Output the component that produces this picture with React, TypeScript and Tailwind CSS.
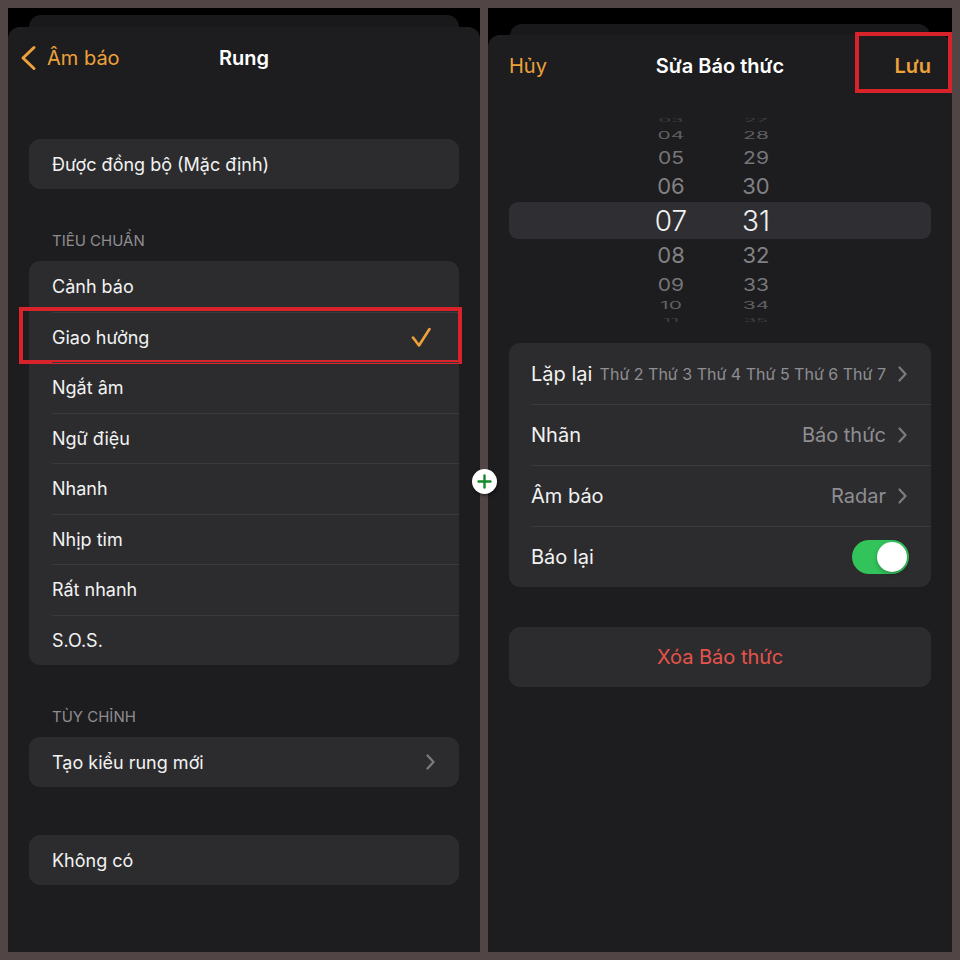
import React from "react";

const FONT = { fontFamily: "Inter, 'Noto Sans', 'Liberation Sans', sans-serif" };

function ChevronRight({ className = "" }: { className?: string }) {
  return (
    <svg width="9" height="16" viewBox="0 0 9 16" className={className} fill="none">
      <polyline points="1.5,1.5 7.5,8 1.5,14.5" stroke="currentColor" strokeWidth="2.2" strokeLinecap="round" strokeLinejoin="round" />
    </svg>
  );
}

function Check() {
  return (
    <svg width="20" height="21" viewBox="0 0 20 21" fill="none">
      <polyline points="2,10.5 8,18.5 18.5,2" stroke="#eda13a" strokeWidth="2.6" strokeLinecap="round" strokeLinejoin="round" />
    </svg>
  );
}

const standard = ["Cảnh báo", "Giao hưởng", "Ngắt âm", "Ngữ điệu", "Nhanh", "Nhịp tim", "Rất nhanh", "S.O.S."];

function LeftSheet() {
  return (
    <div className="flex w-[472px] flex-col bg-black">
      <div className="mx-[21px] mt-[7px] h-[24px] shrink-0 rounded-t-[12px] bg-[#19191b]" />
      <div className="relative -mt-[12px] flex flex-1 flex-col rounded-t-[12px] bg-[#1d1d1f]">
        {/* navigation bar */}
        <div className="relative flex h-[62px] shrink-0 items-center justify-center">
          <div className="absolute left-[12px] top-0 flex h-full items-center gap-[10px] text-[#eda13a]">
            <svg width="17" height="26" viewBox="0 0 17 26" fill="none">
              <polyline points="14,2.5 3,13 14,23.5" stroke="currentColor" strokeWidth="3" strokeLinecap="round" strokeLinejoin="round" />
            </svg>
            <span className="text-[20px] leading-none">Âm báo</span>
          </div>
          <span className="text-[20px] font-semibold leading-none text-white">Rung</span>
        </div>

        <div className="mx-[21px] mt-[50px] flex h-[50px] items-center rounded-[11px] bg-[#2c2c2e] pl-[23px] text-[18px] text-[#f2f2f2]">
          Được đồng bộ (Mặc định)
        </div>

        <div className="mx-[21px] pb-[10px] pl-[23px] pt-[42px] text-[15px] leading-[20px] text-[#8d8d92]">TIÊU CHUẨN</div>
        <div className="mx-[21px] flex flex-col rounded-[11px] bg-[#2c2c2e]">
          {standard.map((name, i) => (
            <div key={name} className="relative h-[50.5px] pl-[23px]">
              <div className={`flex h-full items-center justify-between pr-[28px] text-[18px] text-[#f2f2f2] ${i > 0 ? "border-t border-[#3a3a3c]" : ""}`}>
                <span>{name}</span>
                {i === 1 && <Check />}
              </div>
              {i === 1 && (
                <div className="pointer-events-none absolute -left-[10px] -right-[3px] -top-[4.5px] -bottom-[2px] border-[4px] border-[#d8232a]" />
              )}
            </div>
          ))}
        </div>

        <div className="mx-[21px] pb-[10px] pl-[23px] pt-[42px] text-[15px] leading-[20px] text-[#8d8d92]">TÙY CHỈNH</div>
        <div className="mx-[21px] flex h-[50px] items-center justify-between rounded-[11px] bg-[#2c2c2e] pl-[23px] pr-[24px] text-[18px] text-[#f2f2f2]">
          <span>Tạo kiểu rung mới</span>
          <ChevronRight className="text-[#7c7c80]" />
        </div>

        <div className="mx-[21px] mt-[48px] flex h-[50px] items-center rounded-[11px] bg-[#2c2c2e] pl-[23px] text-[18px] text-[#f2f2f2]">
          Không có
        </div>
      </div>
    </div>
  );
}

type WheelRow = { h: string; hour: string; minute: string; cls: string; selected?: boolean };

const wheel: WheelRow[] = [
  { h: "h-[12px]", hour: "03", minute: "27", cls: "text-[20px] scale-y-[0.22] text-[#8c8c90] opacity-30" },
  { h: "h-[18px]", hour: "04", minute: "28", cls: "text-[21px] scale-y-[0.5] text-[#8c8c90] opacity-60" },
  { h: "h-[26px]", hour: "05", minute: "29", cls: "text-[21px] scale-y-[0.82] text-[#8c8c90] opacity-80" },
  { h: "h-[32px]", hour: "06", minute: "30", cls: "text-[22px] text-[#8c8c90] opacity-90" },
  { h: "h-[37px]", hour: "07", minute: "31", cls: "text-[28px] font-light text-[#f2f2f2]", selected: true },
  { h: "h-[32px]", hour: "08", minute: "32", cls: "text-[22px] text-[#8c8c90] opacity-90" },
  { h: "h-[26px]", hour: "09", minute: "33", cls: "text-[21px] scale-y-[0.82] text-[#8c8c90] opacity-80" },
  { h: "h-[17px]", hour: "10", minute: "34", cls: "text-[21px] scale-y-[0.5] text-[#8c8c90] opacity-60" },
  { h: "h-[12px]", hour: "11", minute: "35", cls: "text-[20px] scale-y-[0.22] text-[#8c8c90] opacity-30" },
];

function SettingRow({ label, children, first }: { label: string; children: React.ReactNode; first?: boolean }) {
  return (
    <div className="h-[61px] pl-[22px]">
      <div className={`flex h-full items-center justify-between pr-[24px] ${first ? "" : "border-t border-[#3a3a3c]"}`}>
        <span className="text-[20px] text-[#f2f2f2]">{label}</span>
        {children}
      </div>
    </div>
  );
}

function RightSheet() {
  return (
    <div className="flex flex-1 flex-col bg-black">
      <div className="mx-[22px] mt-[16px] h-[23px] shrink-0 rounded-t-[12px] bg-[#19191b]" />
      <div className="relative -mt-[12px] flex flex-1 flex-col rounded-t-[12px] bg-[#1d1d1f]">
        {/* navigation bar */}
        <div className="relative flex h-[62px] shrink-0 items-center justify-between px-[21px]">
          <span className="text-[20px] leading-none text-[#eda13a]">Hủy</span>
          <span className="absolute left-0 right-0 text-center text-[20px] font-semibold leading-none text-white">Sửa Báo thức</span>
          <span className="text-[20px] font-semibold leading-none text-[#eda13a]">Lưu</span>
          <div className="pointer-events-none absolute -top-[3px] right-0 h-[61px] w-[97px] border-[4px] border-[#d8232a]" />
        </div>

        {/* time wheel */}
        <div className="mt-[17px] flex flex-col">
          {wheel.map((r) => (
            <div
              key={r.hour}
              className={`mx-[21px] flex ${r.h} items-center gap-[35px] overflow-hidden pl-[137px] ${r.selected ? "rounded-[9px] bg-[#2f2f33]" : ""}`}
            >
              <span className={`w-[50px] text-center leading-none ${r.cls}`}>{r.hour}</span>
              <span className={`w-[50px] text-center leading-none ${r.cls}`}>{r.minute}</span>
            </div>
          ))}
        </div>

        <div className="mx-[21px] mt-[17px] flex flex-col rounded-[11px] bg-[#2c2c2e]">
          <SettingRow label="Lặp lại" first>
            <div className="flex items-center gap-[12px]">
              <span className="text-[16px] text-[#8e8e93]">Thứ 2 Thứ 3 Thứ 4 Thứ 5 Thứ 6 Thứ 7</span>
              <ChevronRight className="text-[#7c7c80]" />
            </div>
          </SettingRow>
          <SettingRow label="Nhãn">
            <div className="flex items-center gap-[12px]">
              <span className="text-[20px] text-[#8e8e93]">Báo thức</span>
              <ChevronRight className="text-[#7c7c80]" />
            </div>
          </SettingRow>
          <SettingRow label="Âm báo">
            <div className="flex items-center gap-[12px]">
              <span className="text-[20px] text-[#8e8e93]">Radar</span>
              <ChevronRight className="text-[#7c7c80]" />
            </div>
          </SettingRow>
          <SettingRow label="Báo lại">
            <div className="-mr-[2px] flex h-[34px] w-[57px] items-center justify-end rounded-full bg-[#32c35a] p-[2px]">
              <div className="h-[30px] w-[30px] rounded-full bg-white shadow-[0_2px_4px_rgba(0,0,0,0.25)]" />
            </div>
          </SettingRow>
        </div>

        <div className="mx-[21px] mt-[40px] flex h-[60px] items-center justify-center rounded-[11px] bg-[#2c2c2e] text-[20px] text-[#e5534b]">
          Xóa Báo thức
        </div>
      </div>
    </div>
  );
}

export default function App() {
  return (
    <div className="relative flex h-[960px] w-[960px] gap-[8px] bg-[#514545] p-[8px]" style={FONT}>
      <LeftSheet />
      <RightSheet />
      <div className="absolute left-[472px] top-[469px] flex h-[25px] w-[25px] items-center justify-center rounded-full bg-white shadow-[1px_2px_3px_rgba(0,0,0,0.45)]">
        <svg width="15" height="15" viewBox="0 0 15 15">
          <path d="M7.5 1.5v12M1.5 7.5h12" stroke="#17892a" strokeWidth="2.4" strokeLinecap="round" />
        </svg>
      </div>
    </div>
  );
}
